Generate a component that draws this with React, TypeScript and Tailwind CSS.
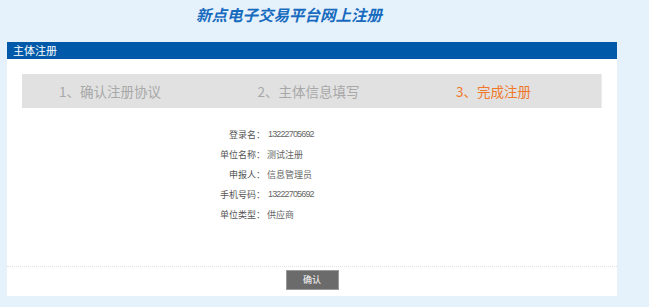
import React from "react";

const steps = [
  { label: "1、确认注册协议", active: false },
  { label: "2、主体信息填写", active: false },
  { label: "3、完成注册", active: true },
];

const rows = [
  { label: "登录名：", value: "13222705692", digits: true },
  { label: "单位名称：", value: "测试注册", digits: false },
  { label: "申报人：", value: "信息管理员", digits: false },
  { label: "手机号码：", value: "13222705692", digits: true },
  { label: "单位类型：", value: "供应商", digits: false },
];

export default function App() {
  return (
    <div className="min-h-screen bg-[#e6f2fb] font-['Noto_Sans_CJK_SC',sans-serif]">
      <div className="h-[42px] pl-[196px] pt-[5px]">
        <h1 className="text-[15.5px] leading-[18px] font-bold italic text-[#176bbf]">
          新点电子交易平台网上注册
        </h1>
      </div>

      <div className="ml-[7px] w-[610px] bg-white">
        <div className="h-[17px] bg-[#005aa9] pl-[6px] text-[11px] leading-[17px] text-white">
          主体注册
        </div>

        <div className="px-[15px] pt-[15px]">
          <div className="flex h-[34px] items-center border-r border-[#ececec] bg-[#e1e1e1] pl-[37px]">
            {steps.map((step) => (
              <div
                key={step.label}
                className={
                  step.active
                    ? "shrink-0 text-[13.5px] leading-[20px] text-[#f0782b]"
                    : "w-[198.5px] shrink-0 text-[13.5px] leading-[20px] text-[#a8a8a8]"
                }
              >
                {step.label}
              </div>
            ))}
          </div>

          <div className="mt-[17px] mb-[41px]">
            {rows.map((row) => (
              <div key={row.label} className="flex h-[20px] items-center text-[9px]">
                <div className="w-[243px] text-right text-[#555]">{row.label}</div>
                <div
                  className={
                    row.digits
                      ? "pl-[3px] font-['Liberation_Sans',sans-serif] text-[9px] tracking-[-0.85px] text-[#666]"
                      : "pl-[2px] text-[#666]"
                  }
                >
                  {row.value}
                </div>
              </div>
            ))}
          </div>
        </div>

        <div className="border-t border-dotted border-[#e2e2e2]" />

        <div className="flex justify-center pt-[3px] pb-[6px]">
          <button
            type="button"
            className="h-[20px] w-[53px] border border-[#9a9a9a] bg-[#6b6b6b] text-[9px] leading-[18px] text-white"
          >
            确认
          </button>
        </div>
      </div>
    </div>
  );
}
